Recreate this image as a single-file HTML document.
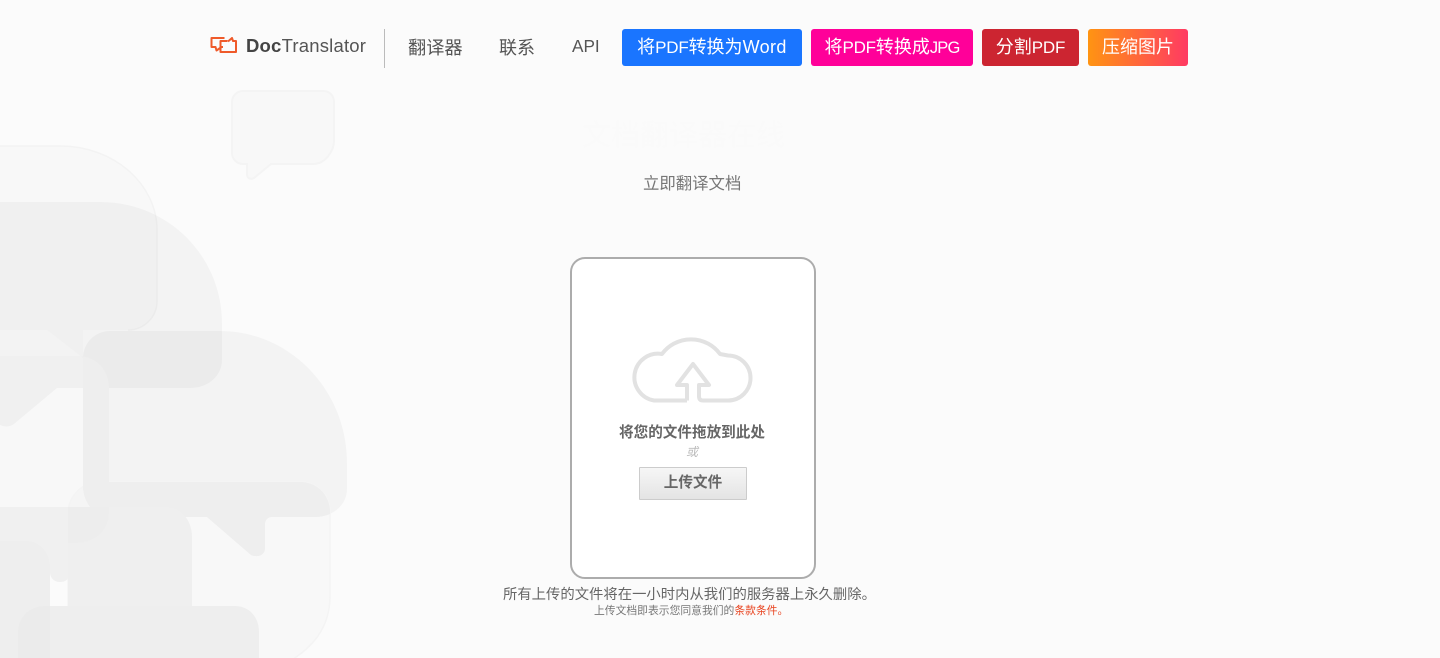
<!DOCTYPE html>
<html lang="zh">
<head>
<meta charset="utf-8">
<title>DocTranslator</title>
<style>
html,body{margin:0;padding:0;width:1440px;height:658px;overflow:hidden;background:#fbfbfb}
body{position:relative;font-family:"Liberation Sans","Noto Sans CJK SC",sans-serif;color:#555}
.t{position:absolute;white-space:nowrap;line-height:1;text-align:center}
.btn{position:absolute;top:29px;height:37px;line-height:36px;border-radius:3px;color:#fff;font-size:18px;text-align:center;white-space:nowrap;font-family:"Liberation Sans","Noto Sans CJK SC",sans-serif}
.p{font-size:17px;letter-spacing:-.2px}
svg{position:absolute;left:0;top:0}
a{color:inherit;text-decoration:none}
</style>
</head>
<body>
<svg width="1440" height="658" viewBox="0 0 1440 658" fill="none">
  <defs>
    <clipPath id="cd"><path d="M100 482H300C318 482 330 496 330 512V596C330 630 310 650 285 664H68V514C68 496 82 482 100 482Z"/></clipPath>
    <clipPath id="cc"><path d="M110 331H220C290 331 347 390 347 463V489C347 505 333 517 315 517H272C268 517 265 520 265 524V548C265 555 258 558 251 555L207 517H110C95 517 83 503 83 485V358C83 343 95 331 110 331Z"/></clipPath>
  </defs>
  <path d="M243 91H323C330 91 334 96 334 102V141C334 150 326 164 313 164H271L254 178C250 180 247 178 247 174V164H243C237 164 232 159 232 153V102C232 96 237 91 243 91Z" fill="#f8f8f8" stroke="#f4f4f4" stroke-width="2"/>
  <path d="M-5 146H60C115 146 157 185 157 230V301C157 318 143 330 128 330H83V358L47 330H-5Z" fill="#000" fill-opacity=".012"/>
  <path d="M-5 146H60C115 146 157 185 157 230V301C157 318 143 330 128 330" stroke="#f3f3f3" stroke-width="1.500"/>
  <path d="M-5 202H100C170 202 222 258 222 323V360C222 376 208 388 190 388H57L14 424C8 428 2 427 -5 422Z" fill="#000" fill-opacity=".03"/>
  <path d="M-5 356H78C96 356 109 370 109 388V512C109 530 95 543 75 543H68V507H-5Z" fill="#000" fill-opacity=".012"/>
  <path d="M110 331H220C290 331 347 390 347 463V489C347 505 333 517 315 517H272C268 517 265 520 265 524V548C265 555 258 558 251 555L207 517H110C95 517 83 503 83 485V358C83 343 95 331 110 331Z" fill="#000" fill-opacity=".03"/>
  <path d="M100 482H300C318 482 330 496 330 512V596C330 630 310 650 285 664H68V514C68 496 82 482 100 482Z" fill="#000" fill-opacity=".012" stroke="#f4f4f4" stroke-width="1.500"/>
  <path d="M110 331H220C290 331 347 390 347 463V489C347 505 333 517 315 517H272C268 517 265 520 265 524V548C265 555 258 558 251 555L207 517H110C95 517 83 503 83 485V358C83 343 95 331 110 331Z" fill="#eee" clip-path="url(#cd)"/>
  <path d="M78 356C96 356 109 370 109 388V520H78Z" fill="#eee" clip-path="url(#cc)"/>
  <path d="M-5 507H69V574C69 580 65 582 60 582C54 582 50 578 50 572V664H-5Z" fill="#f0f0f0"/>
  <path d="M68 507H165C181 507 192 520 192 537V664H68Z" fill="#efefef"/>
  <path d="M68 507H109V512C109 530 95 543 75 543H68Z" fill="#ededed"/>
  <path d="M-5 541H25C40 541 50 552 50 568V664H-5Z" fill="#eee"/>
  <path d="M45 606H235C249 606 259 617 259 632V664H18V632C18 617 30 606 45 606Z" fill="#eee"/>
  <path d="M45 606H50V664H18V632C18 617 30 606 45 606Z" fill="#ebebeb"/>
  <g stroke="#ef5a2a" stroke-width="2" stroke-linejoin="round" fill="none">
    <path d="M224.500 38H211.500V47H215.500L216.500 50.500L221.500 47H223"/>
    <path d="M227.500 41H220.500V52H236V41H233L232 38L228 41.500"/>
  </g>
  <rect x="384" y="29" width="1" height="39" fill="#bbb"/>
</svg>

<div class="t" style="left:246px;top:37px;font-size:18.5px;color:#555;font-family:'Liberation Sans',sans-serif;letter-spacing:.2px"><b style="font-weight:600;color:#444">Doc</b>Translator</div>
<div class="t" style="left:408px;top:39px;font-size:18.200px;color:#555">翻译器</div>
<div class="t" style="left:499px;top:39px;font-size:18px;color:#555">联系</div>
<div class="t" style="left:572px;top:38px;font-size:17.200px;color:#555">API</div>

<div class="btn" style="left:622px;width:180px;background:#1a75ff">将<span class="p">PDF</span>转换为<span style="letter-spacing:.4px">Word</span></div>
<div class="btn" style="left:811px;width:162px;background:#ff0099">将<span class="p">PDF</span>转换成<span style="font-size:16.500px;letter-spacing:-.8px">JPG</span></div>
<div class="btn" style="left:982px;width:97px;background:#cc2531">分割<span class="p">PDF</span></div>
<div class="btn" style="left:1088px;width:100px;background:linear-gradient(90deg,#ff9412,#ff3a63)">压缩图片</div>

<div class="t" style="left:582px;top:122px;font-size:29px;color:#fafafa">文档翻译器在线</div>
<div class="t" style="left:643px;top:176px;font-size:16.400px;color:#777">立即翻译文档</div>

<div style="position:absolute;left:570px;top:257px;width:242px;height:318px;border:2px solid #acacac;border-radius:15px;background:#fff"></div>

<svg width="1440" height="658" viewBox="0 0 1440 658" fill="none">
  <path d="M687 400.500V385H677L693 364L709 385H699V396Q699 400.500 703 400.500H728A22.500 22.500 0 0 0 728 355.500L720 354A36 36 0 0 0 662 354A23 23 0 1 0 654 400.500H687" stroke="#e2e2e2" stroke-width="4" stroke-linejoin="round"/>
</svg>

<div class="t" style="left:619px;top:426px;font-size:14.600px;font-weight:700;color:#666">将您的文件拖放到此处</div>
<div class="t" style="left:686px;top:446px;font-size:12px;font-style:italic;color:#bbb">或</div>
<div style="position:absolute;left:639px;top:467px;width:106px;height:31px;border:1px solid #ccc;border-radius:1px;background:linear-gradient(#f6f6f6,#e4e4e4);line-height:31px;text-align:center;font-size:14.600px;font-weight:700;color:#666">上传文件</div>

<div class="t" style="left:503px;top:588px;font-size:14.350px;color:#666">所有上传的文件将在一小时内从我们的服务器上永久删除。</div>
<div class="t" style="left:594px;top:606px;font-size:10.800px;color:#777">上传文档即表示您同意我们的<a href="#" style="color:#e8431f">条款条件。</a></div>
</body>
</html>
